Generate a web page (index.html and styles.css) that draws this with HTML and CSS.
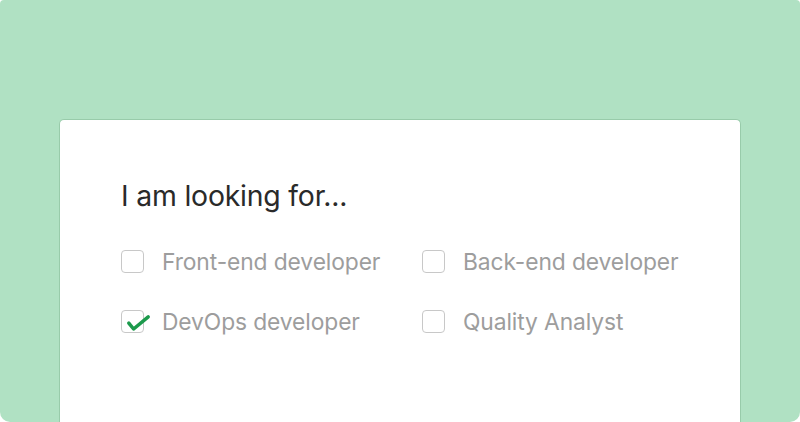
FILE: index.html
```html
<!DOCTYPE html>
<html lang="en">
<head>
<meta charset="utf-8">
<title>I am looking for...</title>
<link rel="stylesheet" href="styles.css">
</head>
<body>
<div class="stage">
  <section class="card">
    <h1 class="title">I am looking for...</h1>
    <div class="options">
      <label class="option"><span class="box"></span><span class="label">Front-end developer</span></label>
      <label class="option"><span class="box"></span><span class="label">Back-end developer</span></label>
      <label class="option"><span class="box checked"><svg class="check" viewBox="0 0 32 26" width="32" height="26"><path d="M7.8 13.2 L12.6 19 L27.2 6.8" fill="none" stroke="#1c9a4c" stroke-width="3.5" stroke-linecap="round" stroke-linejoin="round"/></svg></span><span class="label">DevOps developer</span></label>
      <label class="option"><span class="box"></span><span class="label">Quality Analyst</span></label>
    </div>
  </section>
</div>
</body>
</html>
```

FILE: styles.css
```css
html, body {
  margin: 0;
  padding: 0;
  background: #ffffff;
}
body {
  width: 800px;
  height: 422px;
  overflow: hidden;
  font-family: Inter, "Noto Sans", sans-serif;
}
.stage {
  box-sizing: border-box;
  width: 800px;
  height: 422px;
  background: #b0e1c3;
  border-radius: 4px 4px 10px 10px;
  padding: 119px 59px 0 59px;
  display: flex;
}
.card {
  flex: 1;
  background: #ffffff;
  border: 1px solid #98cbaa;
  border-bottom: none;
  border-radius: 5px 5px 0 0;
  padding: 56px 0 0 61px;
}
.title {
  margin: 0;
  font-size: 28.4px;
  font-weight: 400;
  color: #2a2a2a;
  line-height: 40px;
  letter-spacing: -0.2px;
}
.options {
  margin-top: 31px;
  display: grid;
  grid-template-columns: 301px auto;
  row-gap: 31px;
}
.option {
  display: flex;
  align-items: center;
  gap: 18px;
  height: 29px;
}
.box {
  position: relative;
  box-sizing: border-box;
  width: 23px;
  height: 23px;
  border: 1px solid #c8c8c8;
  border-radius: 4px;
  flex: none;
}
.check {
  position: absolute;
  left: -1px;
  top: -1px;
  overflow: visible;
}
.label {
  font-size: 22.8px;
  color: #9d9d9d;
  letter-spacing: -0.1px;
}
```
